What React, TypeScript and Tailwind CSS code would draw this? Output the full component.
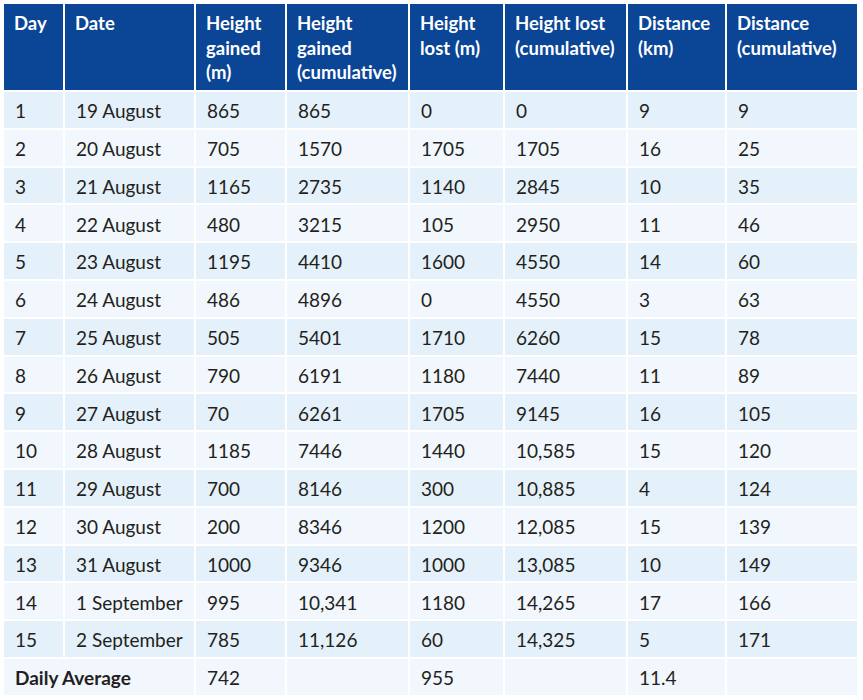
// Trek log table — daily height and distance figures.

const headers = [
  'Day',
  'Date',
  'Height gained (m)',
  'Height gained (cumulative)',
  'Height lost (m)',
  'Height lost (cumulative)',
  'Distance (km)',
  'Distance (cumulative)',
];

const rows: string[][] = [
  ['1', '19 August', '865', '865', '0', '0', '9', '9'],
  ['2', '20 August', '705', '1570', '1705', '1705', '16', '25'],
  ['3', '21 August', '1165', '2735', '1140', '2845', '10', '35'],
  ['4', '22 August', '480', '3215', '105', '2950', '11', '46'],
  ['5', '23 August', '1195', '4410', '1600', '4550', '14', '60'],
  ['6', '24 August', '486', '4896', '0', '4550', '3', '63'],
  ['7', '25 August', '505', '5401', '1710', '6260', '15', '78'],
  ['8', '26 August', '790', '6191', '1180', '7440', '11', '89'],
  ['9', '27 August', '70', '6261', '1705', '9145', '16', '105'],
  ['10', '28 August', '1185', '7446', '1440', '10,585', '15', '120'],
  ['11', '29 August', '700', '8146', '300', '10,885', '4', '124'],
  ['12', '30 August', '200', '8346', '1200', '12,085', '15', '139'],
  ['13', '31 August', '1000', '9346', '1000', '13,085', '10', '149'],
  ['14', '1 September', '995', '10,341', '1180', '14,265', '17', '166'],
  ['15', '2 September', '785', '11,126', '60', '14,325', '5', '171'],
];

const average = ['742', '', '955', '', '11.4', ''];

export default function App() {
  return (
    <div className="bg-white w-[863px] h-[700px] pl-[4px] pt-[4px] font-['Lato','Open_Sans',sans-serif] text-[19px] text-[#231f20]">
      <div className="grid w-[853px] grid-cols-[59px_129px_89px_121px_93px_121px_97px_130px] grid-rows-[86px] auto-rows-[35.8px] gap-[2px]">
        {headers.map((h) => (
          <div
            key={h}
            className="bg-[#0b4595] px-[10px] pt-[7px] text-[18.5px] font-bold leading-[24.5px] text-white"
          >
            {h}
          </div>
        ))}
        {rows.map((row, i) =>
          row.map((cell, j) => (
            <div
              key={`${i}-${j}`}
              className={`${i % 2 === 0 ? 'bg-[#e5f1fa]' : 'bg-[#f1f7fc]'} flex items-center px-[11px] pt-[3px]`}
            >
              {cell}
            </div>
          )),
        )}
        <div className="col-span-2 flex items-center bg-[#f1f7fc] px-[11px] pt-[3px] font-bold">
          Daily Average
        </div>
        {average.map((cell, j) => (
          <div key={`avg-${j}`} className="flex items-center bg-[#f1f7fc] px-[11px] pt-[3px]">
            {cell}
          </div>
        ))}
      </div>
    </div>
  );
}
